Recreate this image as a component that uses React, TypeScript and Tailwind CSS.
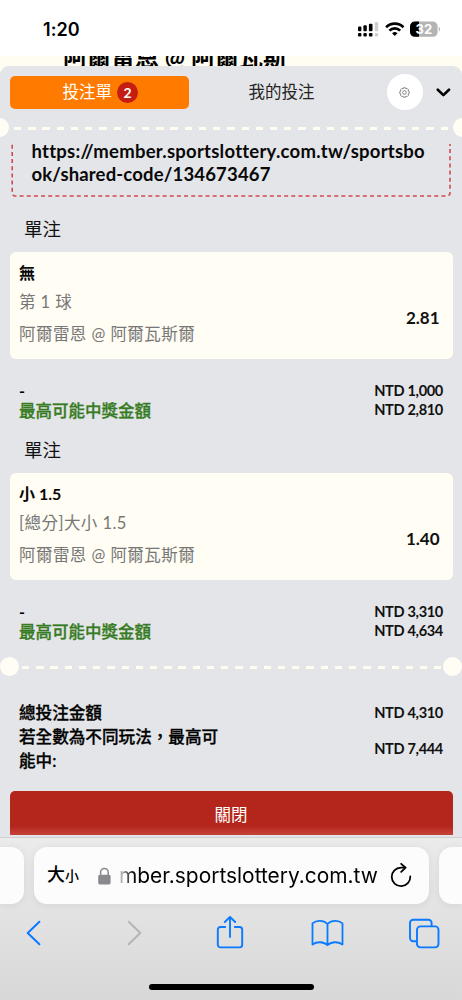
import { ReactNode } from "react";

type Bet = {
  pick: string;
  market: string;
  match: string;
  odds: string;
  stake: string;
  payout: string;
};

const bets: Bet[] = [
  {
    pick: "無",
    market: "第 1 球",
    match: "阿爾雷恩 @ 阿爾瓦斯爾",
    odds: "2.81",
    stake: "NTD 1,000",
    payout: "NTD 2,810",
  },
  {
    pick: "小 1.5",
    market: "[總分]大小 1.5",
    match: "阿爾雷恩 @ 阿爾瓦斯爾",
    odds: "1.40",
    stake: "NTD 3,310",
    payout: "NTD 4,634",
  },
];

function StatusBar() {
  return (
    <div className="flex h-14 shrink-0 items-start justify-between bg-white pr-[21px] pl-[43px] font-['Inter',sans-serif]">
      <span className="mt-[19px] text-[18px] leading-[22px] font-semibold tracking-[0.1px]">1:20</span>
      <svg className="mt-5 h-[18px] w-[83px]" viewBox="0 0 83 18">
        <g fill="#000">
          <rect x="0" y="6.5" width="3.4" height="4.7" rx="1" />
          <rect x="5.4" y="5.3" width="3.4" height="5.9" rx="1" />
          <rect x="10.9" y="3.7" width="3.6" height="7.5" rx="1" />
          <rect x="0" y="13" width="3.4" height="3.6" rx="1" />
          <rect x="5.4" y="13" width="3.4" height="3.6" rx="1" />
          <rect x="10.9" y="13" width="3.6" height="3.6" rx="1" />
        </g>
        <g fill="#cfcfcf">
          <rect x="16.8" y="2" width="3.4" height="9.2" rx="1" />
          <rect x="16.8" y="13" width="3.4" height="3.6" rx="1" />
        </g>
        <g fill="none" stroke="#000" strokeWidth="2.6">
          <path d="M28.1 7.2a12.4 12.4 0 0 1 17.4 0" />
          <path d="M31.4 10.6a7.6 7.6 0 0 1 10.8 0" />
        </g>
        <path d="M36.8 16l-2.7-2.8a3.9 3.9 0 0 1 5.4 0z" fill="#000" />
        <path d="M57 1.6h18a4.6 4.6 0 0 1 4.6 4.6v6a4.6 4.6 0 0 1-4.6 4.6H57z" fill="#b4b4b4" />
        <path d="M61 1.6h-4.4a4.6 4.6 0 0 0-4.6 4.6v6a4.6 4.6 0 0 0 4.6 4.6H61z" fill="#000" />
        <path d="M80.8 6.8c1.7.7 1.7 4 0 4.7z" fill="#b4b4b4" />
        <text x="65.8" y="13.8" textAnchor="middle" fontSize="13" fontWeight="700" fill="#fff">
          32
        </text>
      </svg>
    </div>
  );
}

function Notch() {
  return <span className="size-[19px] shrink-0 rounded-full bg-[#fffdf4]" />;
}

function Dashes() {
  return (
    <span className="mt-[2px] h-[2.5px] flex-1 bg-[repeating-linear-gradient(90deg,#fffdf0_0_7.3px,transparent_7.3px_14.22px)]" />
  );
}

function SlipTabs() {
  return (
    <div className="flex h-[52px] items-center pr-[10px] pl-[9.5px]">
      <button className="flex h-[33px] w-[179.5px] items-center justify-center gap-[5px] rounded-[5px] bg-[#ff7b00] pl-[2px] text-[16.5px] text-white">
        投注單
        <span className="flex size-[21px] items-center justify-center rounded-full bg-[#c61d12] text-[14px] font-bold">
          2
        </span>
      </button>
      <button className="w-[185px] text-center text-[16.5px] text-[#222]">我的投注</button>
      <button className="ml-[13px] flex size-[35.5px] items-center justify-center rounded-full bg-white">
        <svg className="size-[11px]" viewBox="0 0 22 22" fill="none" stroke="#666" strokeWidth="1.5" strokeLinejoin="round">
          <path d="M9 1.5h4l.8 2.4 2.6-1 2.7 2.7-1 2.6 2.4.8v4l-2.4.8 1 2.6-2.7 2.7-2.6-1-.8 2.4H9l-.8-2.4-2.6 1-2.7-2.7 1-2.6-2.4-.8v-4l2.4-.8-1-2.6 2.7-2.7 2.6 1z" />
          <circle cx="11" cy="11" r="3.6" />
        </svg>
      </button>
      <svg className="ml-[13px] h-[10px] w-[15px]" viewBox="0 0 15 10" fill="none" stroke="#000" strokeWidth="2.6" strokeLinecap="round" strokeLinejoin="round">
        <path d="M1.8 2.7l5.6 5.4L13 2.7" />
      </svg>
    </div>
  );
}

function SharedCode() {
  return (
    <div className="relative h-[69px] pt-[3px] pl-[31.5px]">
      <svg className="absolute top-[7px] left-[11px] h-[54px] w-[441px]" viewBox="0 0 441 54" fill="none" stroke="#cf4a50" strokeWidth="1.6">
        <path d="M1.2 0.8V49a3 3 0 0 0 3 3H436a3 3 0 0 0 3-3V0" strokeDasharray="4 3.15" />
      </svg>
      <p className="text-[18.5px] leading-[23px] font-bold whitespace-nowrap text-[#080808]">
        <span className="tracking-[0.25px]">https://member.sportslottery.com.tw/sportsbo</span>
        <br />
        <span className="tracking-[0.16px]">ok/shared-code/134673467</span>
      </p>
    </div>
  );
}

function Row({ label, children }: { label: ReactNode; children: ReactNode }) {
  return (
    <div className="flex items-center justify-between">
      {label}
      <span className="text-[14.6px] font-bold tracking-[-0.35px] text-[#111]">{children}</span>
    </div>
  );
}

function BetBlock({ bet }: { bet: Bet }) {
  return (
    <section className="h-[221px]">
      <h2 className="h-[46px] pl-[24px] text-[18.5px] leading-[46px] text-[#111]">單注</h2>
      <div className="mx-[9.5px] flex h-[107px] items-center justify-between rounded-md bg-[#fffdf4] pr-[13px] pl-[9.5px]">
        <div className="whitespace-nowrap">
          <p className="h-[27px] text-[16px] leading-[26px] font-bold text-[#080808]">{bet.pick}</p>
          <p className="h-[30px] text-[16.5px] leading-[30px] tracking-[0.45px] text-[#777]">{bet.market}</p>
          <p className="h-[34px] text-[16.5px] leading-[34px] tracking-[0.45px] text-[#777]">{bet.match}</p>
        </div>
        <span className="mt-[25px] text-[17px] font-bold text-[#111]">{bet.odds}</span>
      </div>
      <div className="pt-[22px] pr-[19px] pl-[19px] leading-[19px]">
        <Row label={<span className="text-[16px] font-bold">-</span>}>{bet.stake}</Row>
        <Row
          label={
            <span className="-mb-[2px] pt-[2px] text-[16.5px] font-medium text-[#367b22] [-webkit-text-stroke:0.3px_#367b22]">
              最高可能中獎金額
            </span>
          }
        >
          {bet.payout}
        </Row>
      </div>
    </section>
  );
}

function Totals() {
  return (
    <div className="h-[115px] pt-[25px] pr-[19px] pl-[19px] text-[16.6px] leading-6 font-medium text-black">
      <Row label={<span className="[-webkit-text-stroke:0.3px_#000]">總投注金額</span>}>NTD 4,310</Row>
      <Row
        label={
          <span className="[-webkit-text-stroke:0.3px_#000]">
            若全數為不同玩法，最高可
            <br />
            能中:
          </span>
        }
      >
        NTD 7,444
      </Row>
    </div>
  );
}

function BrowserBar() {
  return (
    <footer className="h-[163px] border-t border-[#cfcfd1] bg-linear-to-b from-[#ebebec] via-[#e2e2e3] to-[#d8d8d9] font-['Inter','Noto_Sans_CJK_TC',sans-serif]">
      <div className="mt-[9px] flex h-[57px] gap-[9.5px]">
        <div className="w-[24px] shrink-0 rounded-r-[13px] bg-[#fcfcfd] shadow-[0_1px_8px_rgba(0,0,0,0.07)]" />
        <div className="flex w-[395.5px] shrink-0 items-center rounded-[13px] bg-[#fcfcfd] pl-[13.5px] shadow-[0_1px_8px_rgba(0,0,0,0.07)]">
          <span className="flex w-[51px] items-baseline text-[18px] leading-6 font-medium">
            大<span className="text-[14px]">小</span>
          </span>
          <svg className="h-[18px] w-[13px]" viewBox="0 0 13 18">
            <rect x="0.2" y="7.8" width="12.4" height="9.6" rx="1.6" fill="#8a8a8e" />
            <path d="M2.6 8.2V5.2a3.8 3.8 0 0 1 7.6 0v3" fill="none" stroke="#8a8a8e" strokeWidth="1.5" />
          </svg>
          <span className="ml-[8px] w-[259px] bg-linear-to-r from-[#d5d5d5] to-black to-7% bg-clip-text text-[20.9px] whitespace-nowrap text-transparent">
            mber.sportslottery.com.tw
          </span>
          <svg className="ml-[12px] h-[26px] w-[22px]" viewBox="0 0 22 26" fill="none" stroke="#000" strokeWidth="1.8" strokeLinecap="round" strokeLinejoin="round">
            <path d="M20.3 13.4A9.3 9.3 0 1 1 11 4.6h4" />
            <path d="M11.2 0.9L15.6 4.7l-4.4 4.2" />
          </svg>
        </div>
        <div className="flex-1 rounded-l-[13px] bg-[#fcfcfd] shadow-[0_1px_8px_rgba(0,0,0,0.07)]" />
      </div>
      <nav className="-mr-[11px] -ml-[15px] grid h-[58px] grid-cols-5 place-items-center text-[#0a7aff]">
        <svg className="h-[26px] w-[16px]" viewBox="0 0 16 26" fill="none" stroke="currentColor" strokeWidth="2" strokeLinecap="round" strokeLinejoin="round">
          <path d="M13.4 1.8L1.7 13l11.7 11.2" />
        </svg>
        <svg className="ml-[7px] h-[26px] w-[16px]" viewBox="0 0 16 26" fill="none" stroke="#b5b5b7" strokeWidth="2" strokeLinecap="round" strokeLinejoin="round">
          <path d="M1.7 1.8L13.3 13 1.7 24.2" />
        </svg>
        <svg className="-mt-[2px] ml-[2px] h-[34px] w-[28px]" viewBox="0 0 28 34" fill="none" stroke="currentColor" strokeWidth="1.9" strokeLinecap="round" strokeLinejoin="round">
          <path d="M9.2 12H4.4a2.6 2.6 0 0 0-2.6 2.6v15.2a2.6 2.6 0 0 0 2.6 2.6h19.2a2.6 2.6 0 0 0 2.6-2.6V14.6a2.6 2.6 0 0 0-2.6-2.6h-4.8" />
          <path d="M14 22V2M8.8 7L14 1.8 19.2 7" />
        </svg>
        <svg className="ml-[1px] h-[28px] w-[33px]" viewBox="0 0 33 28" fill="none" stroke="currentColor" strokeWidth="1.8" strokeLinejoin="round" strokeLinecap="round">
          <path d="M16.5 5C14.3 2.6 11.6 1.8 8.7 1.8S3.5 2.5 1.5 4.3v21.2c4.3-3.1 11.2-3.1 15 .7 3.8-3.8 10.7-3.8 15-.7V4.3c-2-1.8-4.3-2.5-7.2-2.5S18.7 2.6 16.5 5zM16.5 5v21" />
        </svg>
        <svg className="h-[31px] w-[32px]" viewBox="0 0 32 31" fill="none" stroke="currentColor" strokeWidth="1.9" strokeLinejoin="round">
          <path d="M8.5 23.2H5.2a3.2 3.2 0 0 1-3.2-3.2V5a3.2 3.2 0 0 1 3.2-3.2h15.2a3.2 3.2 0 0 1 3.2 3.2v3" />
          <rect x="9" y="8.4" width="21.5" height="21" rx="3.4" />
        </svg>
      </nav>
      <div className="mx-auto mt-[22px] h-[6px] w-[165px] rounded-full bg-black" />
    </footer>
  );
}

export default function App() {
  return (
    <div
      lang="zh-TW"
      className="flex h-[1000px] w-[462px] flex-col overflow-hidden bg-[#fffdf2] font-['Lato','Noto_Sans_CJK_TC',sans-serif] text-black"
    >
      <StatusBar />
      {/* page title, scrolled partly behind the status bar and the slip */}
      <div className="h-[10px] shrink-0 overflow-hidden pl-[63px]">
        <p className="-mt-[13px] text-[24px] leading-[28px] font-bold whitespace-nowrap">阿爾雷恩 @ 阿爾瓦斯</p>
      </div>
      <main className="h-[771px] shrink-0 overflow-hidden rounded-t-[9px] bg-[#e4e5e8]">
        <SlipTabs />
        <div className="-mx-[10px] flex h-[19px] items-center gap-[5px]">
          <Notch />
          <Dashes />
          <Notch />
        </div>
        <SharedCode />
        {bets.map((bet) => (
          <BetBlock key={bet.odds} bet={bet} />
        ))}
        <div className="mt-[9px] flex h-[19px] items-center gap-[2.5px]">
          <Notch />
          <Dashes />
          <Notch />
        </div>
        <Totals />
        <button className="mx-[9.5px] flex h-[44px] w-[443px] items-center justify-center rounded-t-[5px] bg-linear-to-b from-[#b4261b] from-80% to-[#c64238] pt-[4px] text-[16.5px] text-white">
          關閉
        </button>
      </main>
      <BrowserBar />
    </div>
  );
}
